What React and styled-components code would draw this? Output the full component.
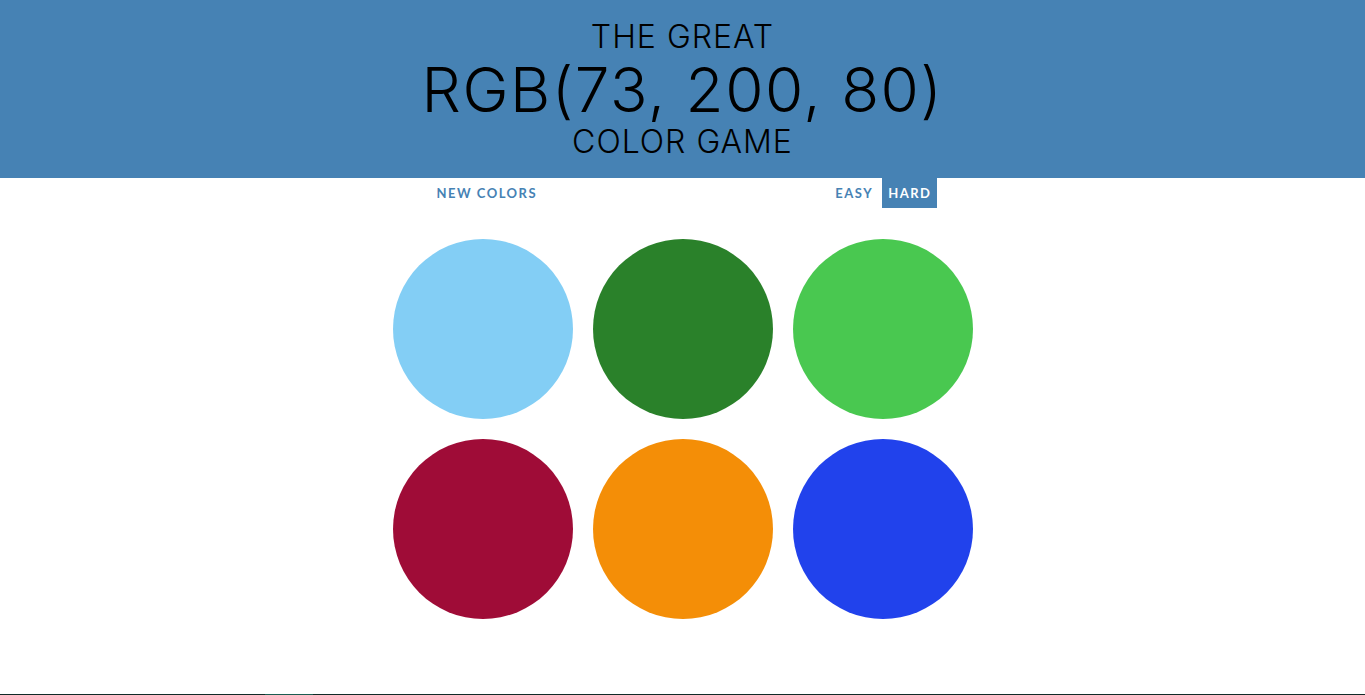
import React from "react";
import styled, { createGlobalStyle } from "styled-components";

const GlobalStyle = createGlobalStyle`
  html, body { margin: 0; padding: 0; background: #ffffff; }
  body { font-family: "Lato", "Liberation Sans", sans-serif; }
  * { box-sizing: border-box; }
`;

const Page = styled.div`
  min-height: 100vh;
  display: flex;
  flex-direction: column;
`;

const Main = styled.main`
  flex: 1;
`;

const Header = styled.header`
  background: #4682b4;
  color: #000000;
  text-align: center;
  font-family: "Inter", "Liberation Sans", sans-serif;
  font-weight: 300;
  height: 178px;
  padding: 18px 0 19px;
  margin: 0;
`;

const Line = styled.div`
  font-size: ${(p) => p.$size}px;
  line-height: ${(p) => p.$lh}px;
  letter-spacing: ${(p) => p.$ls}px;
  white-space: nowrap;
`;

const Stripe = styled.nav`
  width: 600px;
  height: 30px;
  margin: 0 auto;
  padding: 0 46px 0 48px;
  display: flex;
  align-items: stretch;
  justify-content: space-between;
`;

const Group = styled.div`
  display: flex;
  align-items: stretch;
  gap: 4px;
`;

const Button = styled.button`
  border: none;
  margin: 0;
  padding: 0 5px 0 6px;
  font-family: "Lato", "Liberation Sans", sans-serif;
  font-weight: 700;
  font-size: 13px;
  letter-spacing: 1.5px;
  text-transform: uppercase;
  background: ${(p) => (p.$selected ? "#4682b4" : "#ffffff")};
  color: ${(p) => (p.$selected ? "#ffffff" : "#4682b4")};
  cursor: pointer;
  outline: none;
`;

const Board = styled.div`
  display: grid;
  grid-template-columns: repeat(3, 180px);
  gap: 20px;
  justify-content: center;
  margin-top: 31px;
`;

const Circle = styled.div`
  width: 180px;
  height: 180px;
  border-radius: 50%;
  background: ${(p) => p.$color};
`;

const Taskbar = styled.div`
  height: 1px;
  background: linear-gradient(
    to right,
    #112b27 0px,
    #112b27 265px,
    #1b5d51 265px,
    #1b5d51 313px,
    #112b27 313px
  );
`;

const colors = [
  "rgb(131, 206, 245)",
  "rgb(42, 129, 42)",
  "rgb(73, 200, 80)",
  "rgb(159, 12, 55)",
  "rgb(244, 142, 7)",
  "rgb(33, 66, 236)",
];

export default function App() {
  return (
    <Page>
      <GlobalStyle />
      <Main>
        <Header>
          <Line $size={32} $lh={37} $ls={1}>THE GREAT</Line>
          <Line $size={62} $lh={69} $ls={1.5}>RGB(73, 200, 80)</Line>
          <Line $size={32} $lh={35} $ls={1}>COLOR GAME</Line>
        </Header>
        <Stripe>
          <Button>New Colors</Button>
          <Group>
            <Button>Easy</Button>
            <Button $selected>Hard</Button>
          </Group>
        </Stripe>
        <Board>
          {colors.map((c) => (
            <Circle key={c} $color={c} />
          ))}
        </Board>
      </Main>
      <Taskbar />
    </Page>
  );
}
